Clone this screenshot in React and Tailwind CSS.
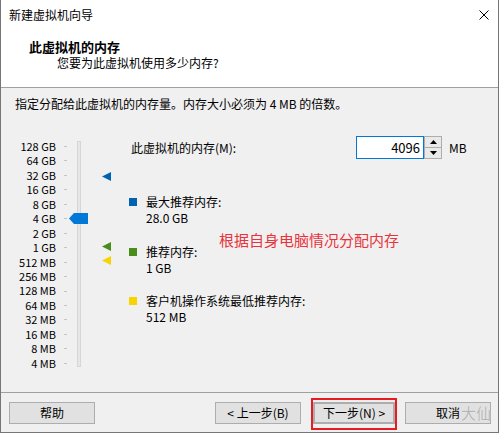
const sizes = [
  '128 GB', '64 GB', '32 GB', '16 GB', '8 GB', '4 GB', '2 GB', '1 GB',
  '512 MB', '256 MB', '128 MB', '64 MB', '32 MB', '16 MB', '8 MB', '4 MB',
]

const ROW = 14.45

function Marker({ color, top }) {
  return (
    <svg className="absolute left-[87px]" style={{ top }} width="9" height="9" viewBox="0 0 9 9">
      <polygon points="0,4.5 9,0 9,9" fill={color} />
    </svg>
  )
}

function MemorySlider() {
  return (
    <div className="relative w-[114px] shrink-0 pt-[3px]">
      <div className="w-[41px] text-right text-[11px]">
        {sizes.map((s) => (
          <div key={s} className="h-[14.45px] leading-[14.45px] whitespace-nowrap">{s}</div>
        ))}
      </div>
      {/* tick marks */}
      {sizes.map((s, i) => (
        <div
          key={'t' + s}
          className="absolute left-[49px] w-[3px] h-px bg-[#c4c4c4]"
          style={{ top: 3 + ROW * i + 7 }}
        />
      ))}
      {/* track */}
      <div className="absolute left-[62px] top-[5px] w-[4px] h-[226px] bg-[#e7e7e7] border border-[#d6d6d6]" />
      {/* thumb on 4 GB */}
      <svg className="absolute left-[54px] top-[77px]" width="19" height="11" viewBox="0 0 19 11">
        <polygon points="0,5.5 5,0 19,0 19,11 5,11" fill="#0078d7" />
      </svg>
      <Marker color="#0063b1" top={36} />
      <Marker color="#4b8d1b" top={106} />
      <Marker color="#f7d300" top={120} />
    </div>
  )
}

function LegendItem({ color, label, value, className }) {
  return (
    <div className={'flex ' + className}>
      <div className={'w-[8px] h-[8px] mt-[4px] ' + color} />
      <div className="ml-[9px] leading-[16px]">
        <div>{label}</div>
        <div>{value}</div>
      </div>
    </div>
  )
}

function Button({ children, className = '' }) {
  return (
    <div className={'h-[22px] flex items-center justify-center bg-[#e1e1e1] border border-[#adadad] ' + className}>
      {children}
    </div>
  )
}

export default function App() {
  return (
    <div className="w-[499px] h-[433px] flex flex-col bg-[#f0f0f0] border-x border-b border-[#767676] font-[Noto_Sans_CJK_SC,Noto_Sans,sans-serif] text-[12px] text-black">
      {/* title + header */}
      <div className="h-[88px] shrink-0 bg-white border-b border-[#a0a0a0]">
        <div className="h-[30px] flex items-center justify-between pl-[8px] pr-[9px]">
          <span className="leading-[16px]">新建虚拟机向导</span>
          <svg width="10" height="10" viewBox="0 0 10 10">
            <path d="M0.5 0.5 L9.5 9.5 M9.5 0.5 L0.5 9.5" stroke="#000" strokeWidth="1" />
          </svg>
        </div>
        <div className="pl-[28px] mt-[9px] leading-[16px] text-[13px] font-bold">此虚拟机的内存</div>
        <div className="pl-[56px] leading-[16px]">您要为此虚拟机使用多少内存?</div>
      </div>

      {/* body */}
      <div className="flex-1 flex flex-col pl-[14px] pt-[8px]">
        <div className="leading-[16px]">指定分配给此虚拟机的内存量。内存大小必须为 4 MB 的倍数。</div>
        <div className="flex mt-[24px]">
          <MemorySlider />
          <div className="relative flex-1">
            <div className="flex items-center h-[23px]">
              <span className="ml-[2px] w-[225px]">此虚拟机的内存(M):</span>
              <div className="w-[68px] h-[23px] bg-white border border-[#0078d7] flex items-center justify-end pr-[3px] text-[13px]">
                4096
              </div>
              <div className="w-[18px] h-[23px] flex flex-col border border-[#adadad] bg-[#e9e9e9]">
                <div className="flex-1 flex items-center justify-center border-b border-[#adadad]">
                  <svg width="7" height="4" viewBox="0 0 7 4"><polygon points="3.5,0 7,4 0,4" fill="#000" /></svg>
                </div>
                <div className="flex-1 flex items-center justify-center">
                  <svg width="7" height="4" viewBox="0 0 7 4"><polygon points="0,0 7,0 3.5,4" fill="#000" /></svg>
                </div>
              </div>
              <span className="ml-[7px]">MB</span>
            </div>

            <LegendItem color="bg-[#0063b1]" label="最大推荐内存:" value="28.0 GB" className="mt-[35px]" />
            <LegendItem color="bg-[#4b8d1b]" label="推荐内存:" value="1 GB" className="mt-[18px]" />
            <LegendItem color="bg-[#f7d300]" label="客户机操作系统最低推荐内存:" value="512 MB" className="mt-[17px]" />

            <div className="absolute left-[90px] top-[96px] text-[15px] leading-[16px] text-[#e8333c] whitespace-nowrap">
              根据自身电脑情况分配内存
            </div>
          </div>
        </div>
      </div>

      {/* footer */}
      <div className="h-[40px] shrink-0 border-t border-[#a0a0a0] flex items-start justify-between pt-[9px] pl-[8px] pr-[7px]">
        <Button className="w-[86px]">帮助</Button>
        <div className="flex">
          <Button className="w-[86px]">&lt; 上一步(B)</Button>
          <div className="relative ml-[12px]">
            <Button className="w-[82px] border-2 border-[#0078d7]">下一步(N) &gt;</Button>
            <div className="absolute -left-[2px] -right-[2px] -top-[4px] -bottom-[6px] border-2 border-[#e51c23]" />
          </div>
          <div className="relative ml-[10px]">
            <Button className="w-[86px]">取消</Button>
            <span className="absolute left-[56px] top-[2px] text-[15px] leading-[18px] text-[#b4b4b4] whitespace-nowrap [text-shadow:0_0_1px_#fff]">
              大仙
            </span>
          </div>
        </div>
      </div>
    </div>
  )
}
